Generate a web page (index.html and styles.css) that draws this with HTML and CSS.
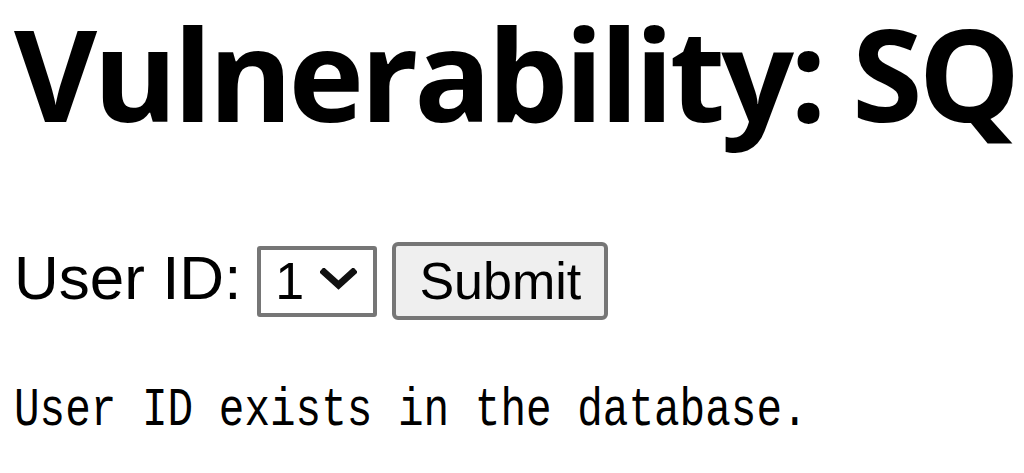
FILE: index.html
```html
<!DOCTYPE html>
<html lang="en">
<head>
<meta charset="utf-8">
<title>Vulnerability: SQL Injection (Blind)</title>
<link rel="stylesheet" href="styles.css">
</head>
<body>
<div class="page">
  <h1 class="title">Vulnerability: SQL Injection (Blind)</h1>
  <form class="form-row" action="#" method="get">
    <label class="label" for="uid">User ID:</label>
    <select class="select" id="uid" name="id">
      <option value="1" selected>1</option>
      <option value="2">2</option>
      <option value="3">3</option>
      <option value="4">4</option>
      <option value="5">5</option>
    </select>
    <button class="submit" type="button">Submit</button>
  </form>
  <pre class="result">User ID exists in the database.</pre>
</div>
</body>
</html>
```

FILE: styles.css
```css
html, body {
  margin: 0;
  padding: 0;
  background: #ffffff;
  overflow: hidden;
}

.page {
  padding-left: 14px;
  width: 2000px;
}

.title {
  margin: 0;
  font-family: "Open Sans", "Noto Sans", sans-serif;
  font-weight: 700;
  font-size: 128px;
  letter-spacing: -4px;
  line-height: 145px;
  color: #000;
  white-space: nowrap;
}

.form-row {
  display: flex;
  align-items: baseline;
  margin-top: 97px;
  height: 78px;
}

.label {
  font-family: "Liberation Sans", Arial, sans-serif;
  font-size: 62px;
  color: #000;
  margin-right: 16px;
}

.select {
  appearance: none;
  -webkit-appearance: none;
  box-sizing: border-box;
  width: 120px;
  height: 71px;
  border: 4px solid #767676;
  border-radius: 3px;
  background-color: #fff;
  background-image: url("data:image/svg+xml;utf8,<svg xmlns='http://www.w3.org/2000/svg' width='37' height='23' viewBox='0 0 37 23'><polyline points='4,4 18.5,17 33,4' fill='none' stroke='%23111' stroke-width='7' stroke-linecap='square'/></svg>");
  background-repeat: no-repeat;
  background-position: 59px 18px;
  font-family: "Liberation Sans", Arial, sans-serif;
  font-size: 52px;
  color: #000;
  padding: 0 0 0 14px;
  margin-right: 15px;
}

.submit {
  box-sizing: border-box;
  width: 216px;
  height: 78px;
  border: 4px solid #767676;
  border-radius: 6px;
  background: #efefef;
  font-family: "Liberation Sans", Arial, sans-serif;
  font-size: 52px;
  color: #000;
  padding: 0;
}

.result {
  margin: 60px 0 0 0;
  font-family: "Liberation Mono", "Courier New", monospace;
  font-size: 54px;
  line-height: 61px;
  color: #000;
  transform: scaleX(0.79);
  transform-origin: left center;
  white-space: pre;
}
```
